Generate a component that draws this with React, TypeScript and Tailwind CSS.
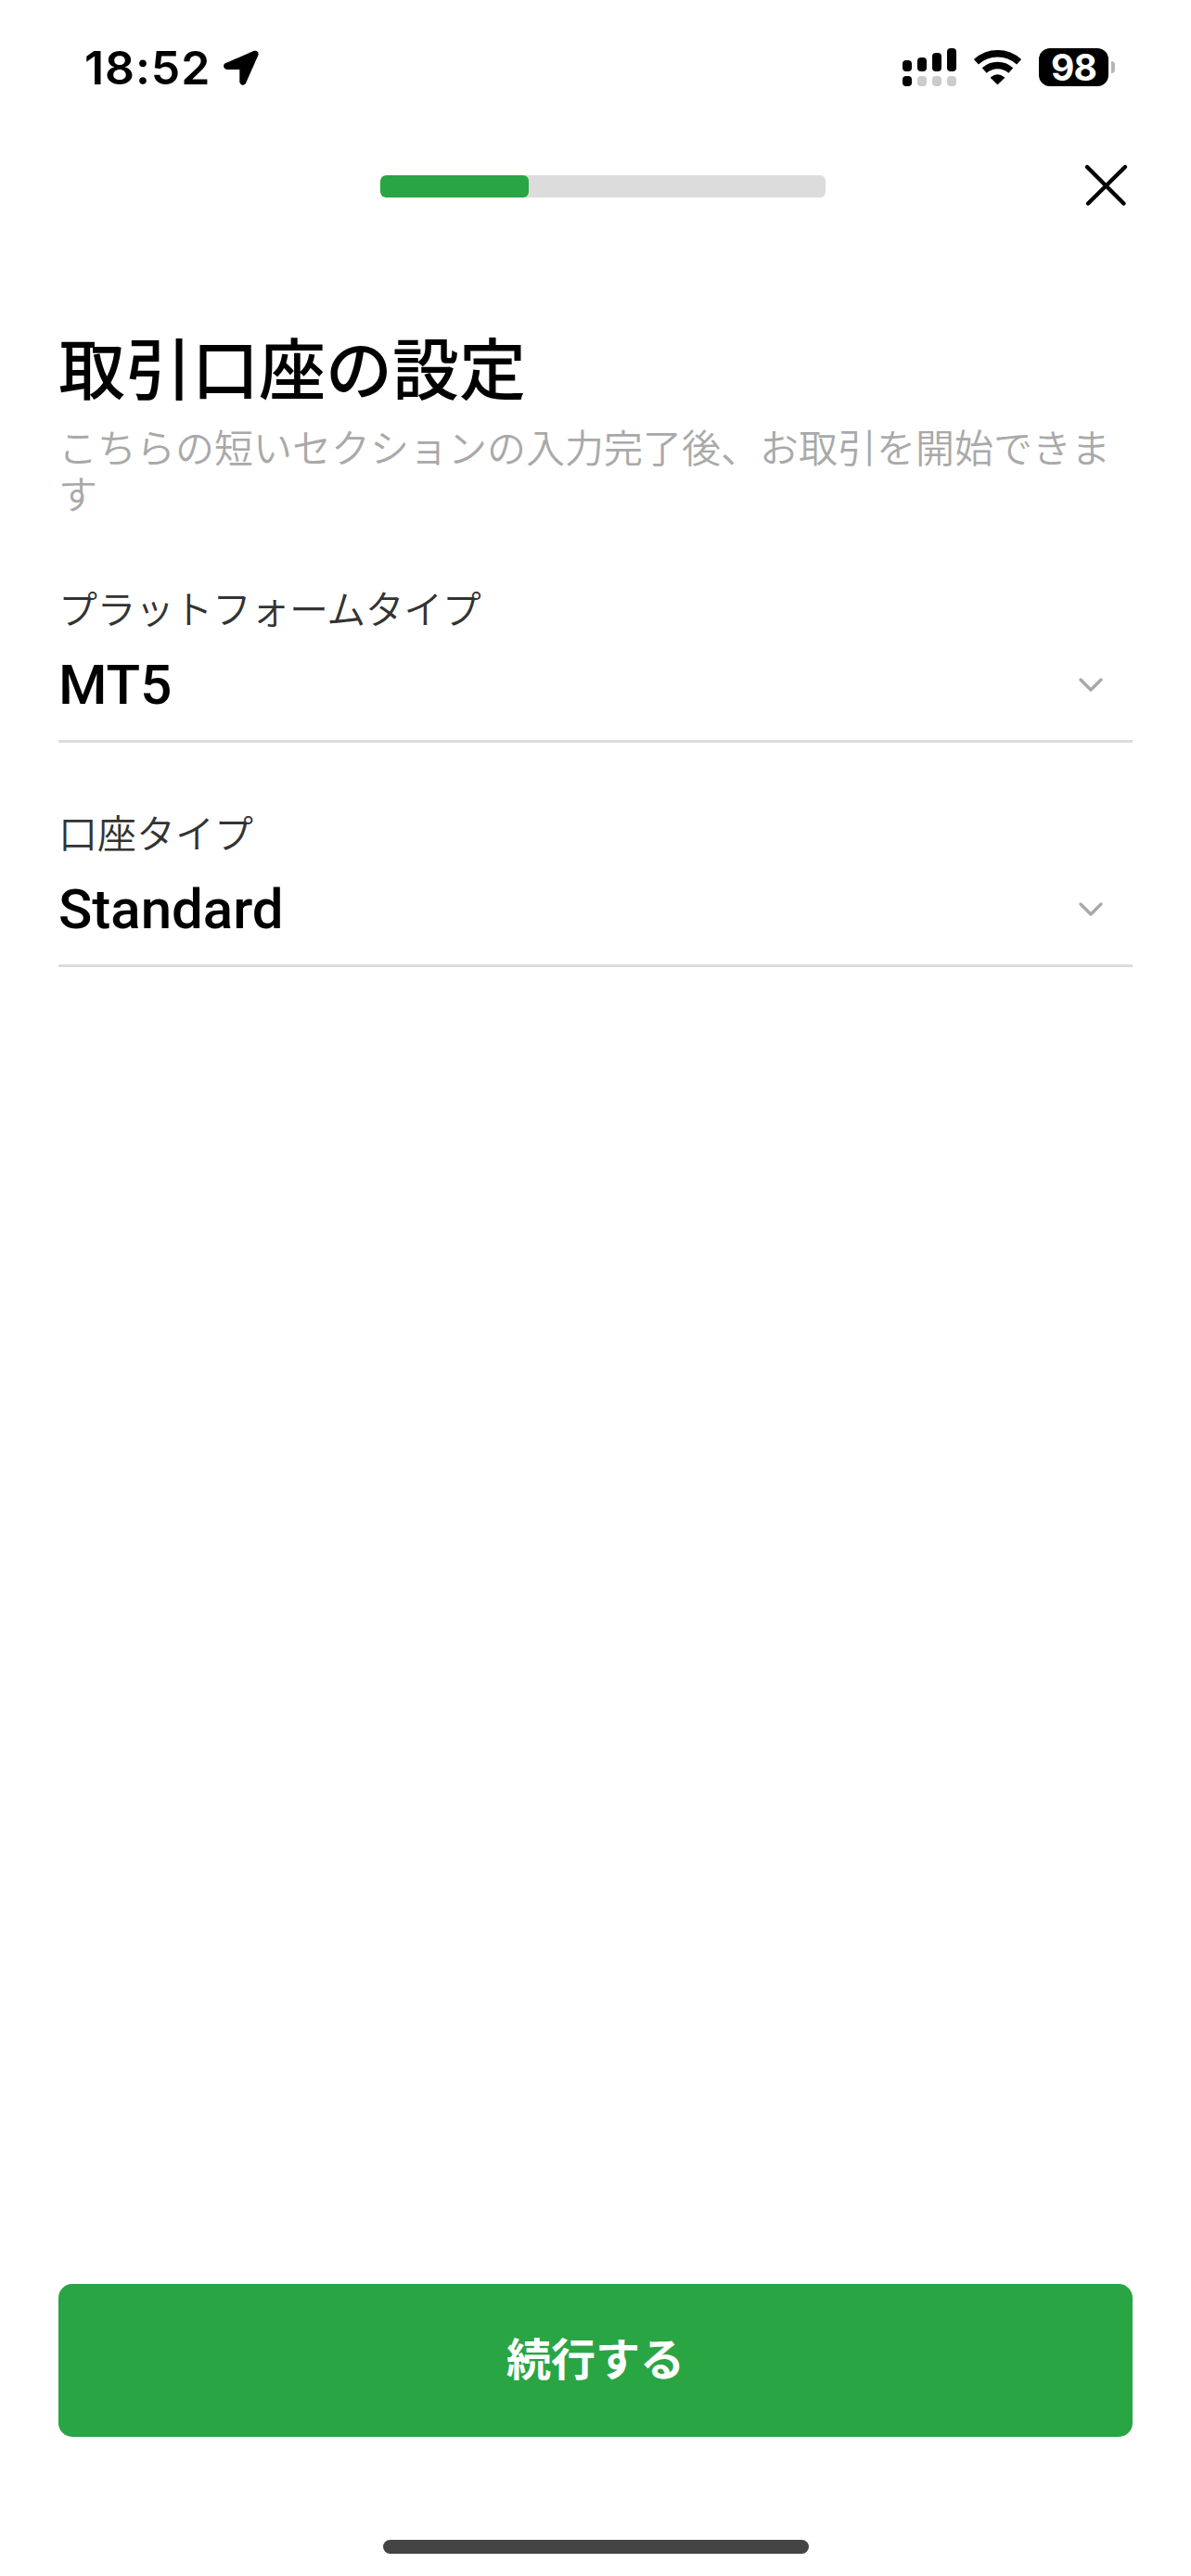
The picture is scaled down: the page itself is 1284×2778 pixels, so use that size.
const SIGNAL_BARS = ['h-[12px]', 'h-[15px]', 'h-[20px]', 'h-[25px]'];

function StatusBar() {
  return (
    <div className="flex h-[146px] items-start justify-between pt-[52px] pr-[82px] pl-[91px] text-black">
      <div className="flex items-start">
        <span className="-mt-[2px] w-[149px] font-['Inter'] text-[50px] leading-[46px] font-semibold tracking-[0.9px]">18:52</span>
        <svg className="mt-[1px] h-[42px] w-[40px]" viewBox="0 0 40 42">
          <path
            d="M3 16.8 34.5 3.2Q37.5 2.8 37 6L23.5 36.3Q21 38.5 19.8 35.5V20.4H4.5Q1.8 19.5 3 16.8Z"
            fill="black"
            stroke="black"
            strokeWidth="3"
            strokeLinejoin="round"
          />
        </svg>
      </div>
      <div className="flex h-[41px] items-start">
        <div className="flex h-[41px] w-[58px] justify-between">
          {SIGNAL_BARS.map((height, i) => (
            <div key={height} className="flex h-[41px] w-[10px] flex-col justify-end gap-[5px]">
              <div className={`${height} rounded-[4px] bg-black`} />
              <div className={`h-[11px] rounded-[4px] ${i === 0 ? 'bg-black' : 'bg-[#cbcbcb]'}`} />
            </div>
          ))}
        </div>
        <svg className="mt-[1px] ml-[18px] h-[40px] w-[53px]" viewBox="0 0 53 40">
          <g fill="none" stroke="black" strokeWidth="7.4">
            <path d="M3.4 13.8C16.5 1.8 36.5 1.8 49.6 13.8" />
            <path d="M12.2 23.1C20.5 15.7 32.5 15.7 40.8 23.1" />
          </g>
          <path d="M19.1 30.3Q26.5 24.2 33.9 30.3Q34.3 30.8 33.8 31.3L27.2 37.8Q26.5 38.4 25.8 37.8L19.2 31.3Q18.7 30.8 19.1 30.3Z" fill="black" />
        </svg>
        <div className="ml-[18px] flex h-[41px] w-[75px] items-center justify-center rounded-[12px] bg-black font-['Inter'] text-[39px] leading-[41px] font-bold tracking-[-0.8px] text-white">
          98
        </div>
        <div className="mt-[14px] ml-[3px] h-[13px] w-[4px] rounded-r-full bg-[#b5b5b5]" />
      </div>
    </div>
  );
}

function Header() {
  return (
    <header className="flex h-[109px] items-start pl-[410px]">
      <div className="mt-[43px] h-[24px] w-[480px] overflow-hidden rounded-[6px] bg-[#dcdcdc]">
        <div className="h-full w-1/3 rounded-[6px] bg-[#2aa544]" />
      </div>
      <button aria-label="閉じる" className="mt-[29px] ml-[277px] h-[50px] w-[50px]">
        <svg viewBox="0 0 50 50" stroke="black" strokeWidth="4.4" strokeLinecap="round">
          <path d="M5 5 44.5 44.5M46 5 6 44.5" />
        </svg>
      </button>
    </header>
  );
}

function SelectField({ label, value, tight = false }: { label: string; value: string; tight?: boolean }) {
  return (
    <div className="flex h-[242px] flex-col">
      <label
        className={`h-[60px] text-[42px] leading-[59px] font-[350] whitespace-nowrap text-[#333333] ${tight ? 'tracking-[-0.5px]' : ''}`}
      >
        {label}
      </label>
      <div className="flex h-[116px] items-start justify-between border-b-[3px] border-[#dcdcdc] pr-[31px]">
        <span className="mt-[19px] font-['Roboto'] text-[60px] leading-[70px] font-medium text-black">{value}</span>
        <svg className="mt-[44px] h-[20px] w-[28px]" viewBox="0 0 28 20" fill="none" stroke="#a9a9a9" strokeWidth="3.4" strokeLinecap="round" strokeLinejoin="round">
          <path d="M3 4 14 15 25 4" />
        </svg>
      </div>
    </div>
  );
}

export default function App() {
  return (
    <div lang="ja" className="flex h-[2778px] w-[1284px] flex-col bg-white font-['Noto_Sans_CJK_JP',sans-serif]">
      <StatusBar />
      <Header />
      <main className="flex flex-1 flex-col px-[63px] pt-[94px]">
        <h1 className="h-[107px] text-[72px] leading-[90px] font-medium text-black">取引口座の設定</h1>
        <p className="h-[169px] text-[42px] leading-[50px] font-[350] text-[#a9a9a9]">
          こちらの短いセクションの入力完了後、お取引を開始できます
        </p>
        <SelectField label="プラットフォームタイプ" value="MT5" tight />
        <SelectField label="口座タイプ" value="Standard" />
      </main>
      <footer className="flex flex-col items-center px-[63px] pb-[24px]">
        <button className="h-[165px] w-full rounded-[15px] bg-[#2aa544] pb-[9px] text-[48px] font-bold text-white">続行する</button>
        <div className="mt-[111px] h-[15px] w-[459px] rounded-full bg-[#444444]" />
      </footer>
    </div>
  );
}
